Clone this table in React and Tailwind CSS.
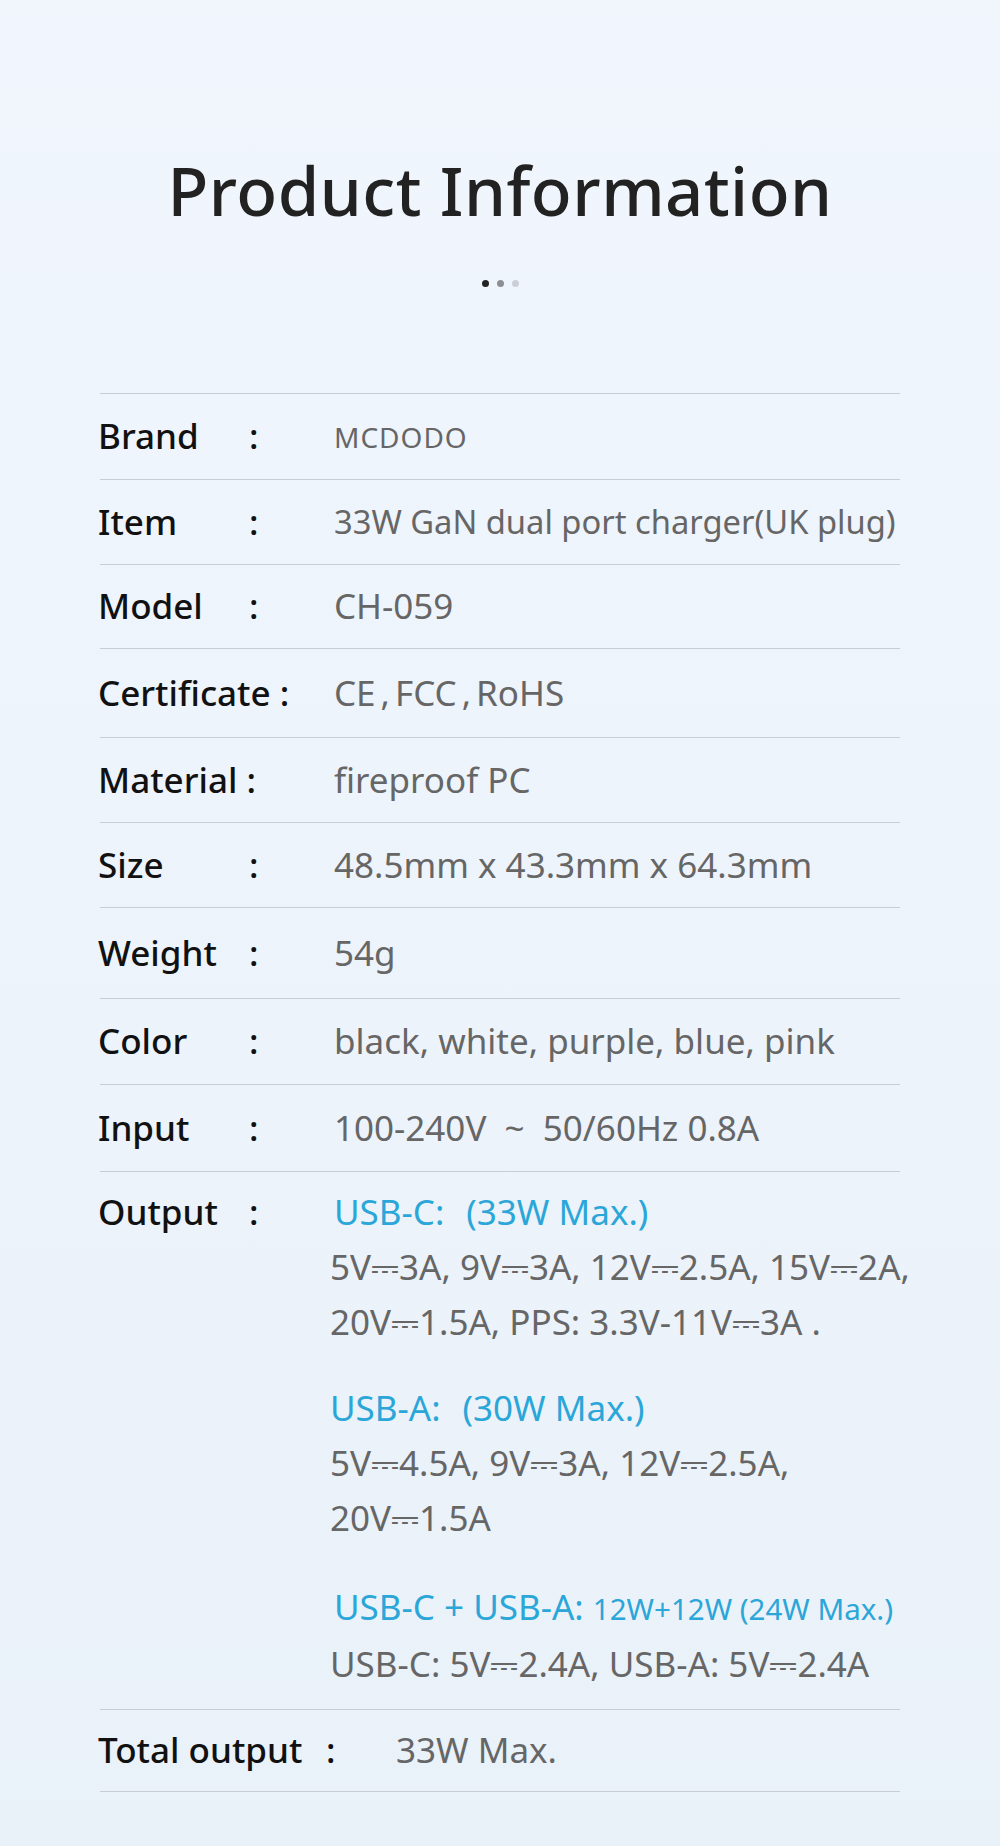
import React from "react";

const rows = [
   { label: "Brand", value: "MCDODO", h: "h-[85px]", cls: "text-[28px] tracking-[1px]" },
   { label: "Item", value: "33W GaN dual port charger(UK plug)", h: "h-[84px]", cls: "text-[32.7px]" },
   { label: "Model", value: "CH-059", h: "h-[83px]" },
   {
      label: "Certificate",
      value: (
         <>
            CE<span className="mx-[5px]">,</span>FCC<span className="mx-[5px]">,</span>RoHS
         </>
      ),
      h: "h-[88px]",
      wide: true,
   },
   { label: "Material", value: "fireproof PC", h: "h-[84px]", wide: true },
   { label: "Size", value: "48.5mm x 43.3mm x 64.3mm", h: "h-[84px]" },
   { label: "Weight", value: "54g", h: "h-[90px]" },
   { label: "Color", value: "black, white, purple, blue, pink", h: "h-[85px]" },
   { label: "Input", value: "100-240V  ~  50/60Hz 0.8A", h: "h-[86px]" },
];

const Label = ({ text, wide }) =>
   wide ? (
      <div className="w-[236px] shrink-0 text-[#111] font-medium">
         {text} :
      </div>
   ) : (
      <div className="w-[236px] shrink-0 flex text-[#111] font-medium">
         <span className="w-[151px]">{text}</span>
         <span>:</span>
      </div>
   );

const Line = () => <div className="h-px bg-[#c8cdd3]" />;

const App = () => {
   return (
      <div
         className="w-[1000px] h-[1846px] bg-gradient-to-b from-[#f1f6fd] to-[#e9f1f9] overflow-hidden"
         style={{ fontFamily: '"Noto Sans", "Liberation Sans", sans-serif' }}
      >
         <div className="flex flex-col items-center pt-[150px]">
            <h1 className="text-[67px] leading-[80px] font-medium text-[#222] tracking-[0.5px]">
               Product Information
            </h1>
            <div className="flex gap-[8px] mt-[50px]">
               <span className="w-[7px] h-[7px] rounded-full bg-[#222]" />
               <span className="w-[7px] h-[7px] rounded-full bg-[#8c8f94]" />
               <span className="w-[7px] h-[7px] rounded-full bg-[#cbd0d6]" />
            </div>
         </div>

         <div className="mx-[100px] mt-[106px] text-[35px]">
            <Line />
            {rows.map((r) => (
               <div key={r.label}>
                  <div className={`${r.h} flex items-center -ml-[2px]`}>
                     <Label text={r.label} wide={r.wide} />
                     <div className={`text-[#666] whitespace-pre ${r.cls || ""}`}>{r.value}</div>
                  </div>
                  <Line />
               </div>
            ))}

            <div className="h-[537px] flex pt-[12px] -ml-[2px] leading-[55px]">
               <Label text="Output" />
               <div className="-ml-[4px] text-[#666] whitespace-nowrap">
                  <div className="text-[#2ba6d8] pl-[4px]">
                     USB-C:<span className="ml-[22px]">(33W Max.)</span>
                  </div>
                  <div>5V⎓3A, 9V⎓3A, 12V⎓2.5A, 15V⎓2A,</div>
                  <div>20V⎓1.5A, PPS: 3.3V-11V⎓3A .</div>
                  <div className="text-[#2ba6d8] mt-[31px]">
                     USB-A:<span className="ml-[22px]">(30W Max.)</span>
                  </div>
                  <div>5V⎓4.5A, 9V⎓3A, 12V⎓2.5A,</div>
                  <div>20V⎓1.5A</div>
                  <div className="text-[#2ba6d8] mt-[34px] pl-[4px]">
                     USB-C + USB-A: <span className="text-[29.5px]">12W+12W (24W Max.)</span>
                  </div>
                  <div>USB-C: 5V⎓2.4A, USB-A: 5V⎓2.4A</div>
               </div>
            </div>
            <Line />
            <div className="h-[81px] flex items-center -ml-[2px]">
               <div className="w-[298px] shrink-0 flex text-[#111] font-medium">
                  <span className="w-[228px]">Total output</span>
                  <span>:</span>
               </div>
               <div className="text-[#666]">33W Max.</div>
            </div>
            <Line />
         </div>
      </div>
   );
};

export default App;
